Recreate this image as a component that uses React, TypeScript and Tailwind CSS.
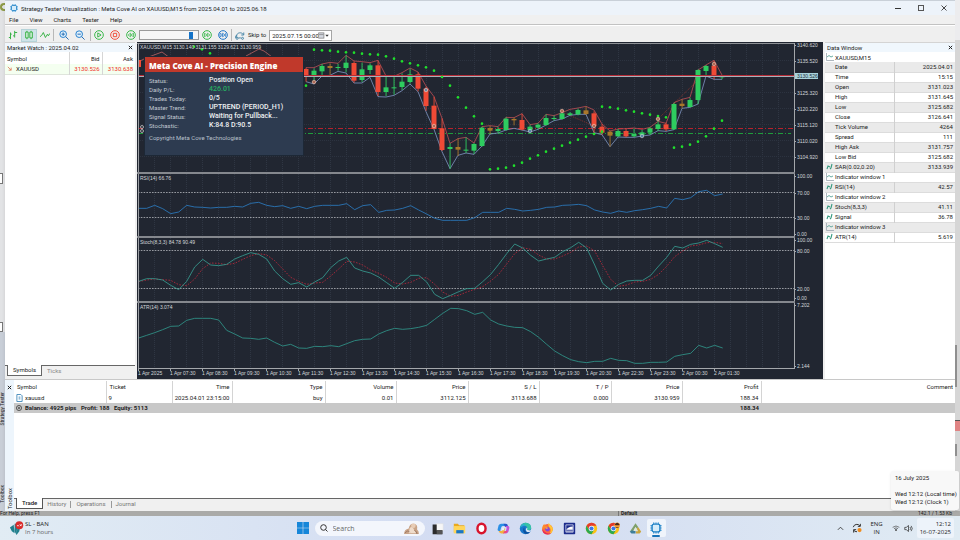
import type { ReactNode } from "react";

type Candle = [number, number, number, number, string];

const UP = "#2ecc5f";
const DOWN = "#f04a36";
const FLAT = "#a8772a";

// Chart values are stored in thirds of a pixel
const u = (v: number) => v / 3;

// high, body top, body bottom, low, color
const candles: Candle[] = [
  [203, 207, 229, 245, DOWN],
  [205, 212, 231, 243, UP],
  [192, 198, 214, 226, UP],
  [190, 198, 204, 224, FLAT],
  [191, 201, 204, 212, UP],
  [166, 188, 204, 217, UP],
  [184, 189, 242, 248, DOWN],
  [188, 208, 240, 246, UP],
  [190, 196, 210, 222, UP],
  [182, 196, 276, 288, DOWN],
  [228, 262, 276, 288, UP],
  [230, 262, 265, 284, UP],
  [220, 245, 261, 270, UP],
  [206, 223, 246, 251, UP],
  [217, 223, 266, 274, DOWN],
  [260, 266, 318, 332, DOWN],
  [290, 317, 387, 388, DOWN],
  [355, 385, 450, 453, DOWN],
  [430, 441, 447, 506, UP],
  [415, 441, 449, 468, FLAT],
  [412, 449, 452, 459, UP],
  [429, 432, 452, 462, UP],
  [380, 383, 438, 440, UP],
  [378, 384, 392, 402, FLAT],
  [380, 387, 393, 399, UP],
  [352, 356, 390, 392, UP],
  [353, 357, 361, 376, FLAT],
  [341, 360, 389, 391, DOWN],
  [374, 380, 390, 396, UP],
  [370, 374, 383, 388, UP],
  [343, 354, 375, 377, UP],
  [347, 354, 357, 362, UP],
  [338, 340, 357, 359, UP],
  [336, 340, 345, 348, UP],
  [326, 330, 343, 346, UP],
  [320, 331, 342, 345, FLAT],
  [334, 340, 378, 398, DOWN],
  [372, 380, 398, 404, DOWN],
  [392, 395, 407, 440, FLAT],
  [387, 393, 409, 411, UP],
  [386, 393, 409, 412, DOWN],
  [386, 402, 409, 411, UP],
  [390, 397, 405, 408, UP],
  [382, 385, 398, 405, UP],
  [364, 373, 387, 393, UP],
  [368, 373, 388, 393, DOWN],
  [308, 312, 388, 390, UP],
  [298, 311, 318, 325, FLAT],
  [293, 300, 321, 322, UP],
  [208, 210, 300, 312, UP],
  [195, 198, 213, 228, UP],
  [182, 197, 231, 238, DOWN],
  [226, 229, 232, 238, UP],
];

const sarFirst = [149, 151, 152, 155, 157, 158, 161, 163, 164, 169, 176, 184, 190, 196, 202, 212, 231, 257, 292, 323, 349, 371];
const sarSecond = [508, 506, 503, 497, 488, 476, 466, 455, 446, 437, 428, 419, 410, 402, 395];
const sarThird = [320, 322, 326, 331, 335, 340, 344, 348, 352];
const sarFourth = [443, 440, 434, 425, 409, 386, 362];

const highs = [
  203, 203, 192, 187, 190, 166, 183, 185, 188, 181, 228, 229, 218, 204, 216, 258, 290, 355, 430, 416, 412, 429, 380, 377, 380, 352, 353, 341, 374, 370, 343, 347, 338, 328, 324, 319, 330, 372, 393, 387,
  386, 384, 388, 382, 364, 370, 308, 298, 292, 210, 195, 181, 225,
];
const lows = [
  245, 252, 228, 226, 214, 219, 249, 249, 232, 290, 291, 286, 272, 252, 275, 335, 388, 455, 506, 466, 459, 463, 438, 402, 399, 390, 385, 390, 396, 388, 375, 362, 357, 346, 343, 343, 398, 404, 440, 411,
  412, 412, 408, 405, 392, 394, 389, 325, 322, 312, 228, 238, 238,
];

const rsi = [
  130, 130, 121, 131, 146, 141, 121, 126, 127, 129, 127, 127, 124, 126, 115, 112, 121, 125, 122, 130, 124, 131, 124, 121, 121, 121, 116, 134, 122, 119, 142, 136, 135, 130, 122, 135, 147, 160, 166, 166,
  166, 166, 158, 142, 142, 142, 130, 133, 138, 136, 133, 127, 126, 121, 120, 118, 122, 135, 141, 145, 138, 142, 137, 134, 130, 124, 129, 100, 104, 98, 80, 76, 92, 87,
];
const stoch = [
  349, 341, 341, 345, 361, 374, 349, 306, 283, 300, 302, 298, 282, 272, 263, 268, 282, 318, 341, 358, 353, 366, 351, 338, 308, 288, 277, 309, 318, 324, 336, 353, 370, 352, 331, 331, 351, 388, 401, 391,
  380, 371, 370, 350, 328, 298, 266, 237, 249, 271, 288, 282, 277, 260, 248, 232, 249, 300, 355, 375, 358, 348, 346, 346, 331, 303, 277, 244, 249, 238, 234, 226, 236, 247,
];
const stochSignal = [
  350, 345, 342, 344, 346, 359, 362, 342, 311, 294, 295, 299, 295, 283, 272, 266, 270, 287, 312, 337, 349, 358, 354, 352, 333, 312, 289, 291, 300, 315, 325, 337, 354, 357, 352, 340, 338, 358, 381, 394,
  391, 381, 373, 365, 348, 328, 297, 266, 248, 253, 270, 282, 282, 273, 262, 246, 243, 258, 302, 343, 364, 360, 351, 349, 343, 328, 304, 275, 258, 243, 240, 233, 232, 236,
];
const atr = [
  519, 511, 503, 494, 484, 483, 466, 460, 460, 460, 465, 496, 507, 519, 520, 523, 519, 532, 543, 538, 549, 550, 544, 545, 542, 545, 536, 527, 523, 522, 507, 497, 490, 493, 491, 487, 481, 463, 445, 430,
  431, 437, 448, 442, 465, 477, 483, 487, 488, 500, 517, 538, 558, 572, 584, 590, 593, 589, 589, 580, 586, 587, 595, 595, 592, 592, 591, 574, 569, 565, 541, 549, 541, 549,
];

const priceLabels: [string, number][] = [
  ["3140.620", 45],
  ["3135.520", 61],
  ["3125.320", 93],
  ["3120.220", 109],
  ["3115.120", 125],
  ["3110.020", 141],
  ["3104.920", 157],
  ["100.00", 176],
  ["70.00", 193],
  ["30.00", 218],
  ["0.00", 234],
  ["100.00", 240],
  ["80.00", 251],
  ["20.00", 289],
  ["0.00", 298],
  ["7.202", 305],
  ["2.144", 366],
];

const timeLabels = [
  "1 Apr 2025", "1 Apr 07:30", "1 Apr 08:30", "1 Apr 09:30", "1 Apr 10:30", "1 Apr 11:30", "1 Apr 12:30", "1 Apr 13:30", "1 Apr 14:30", "1 Apr 15:30",
  "1 Apr 16:30", "1 Apr 17:30", "1 Apr 18:30", "1 Apr 19:30", "1 Apr 20:30", "1 Apr 22:30", "1 Apr 23:30", "2 Apr 00:30", "2 Apr 01:30",
];

const markers: [number, number, string][] = [
  [314, 82, "#f28a6a"],
  [426, 90, "#8fb8d8"],
  [434, 126, "#f28a6a"],
  [530, 131, "#6fb6e6"],
  [562, 111, "#f28a6a"],
  [594, 126, "#f28a6a"],
  [642, 136, "#6fb6e6"],
  [658, 119, "#f2a07a"],
  [714, 64, "#f28a6a"],
];

function line(values: number[], x0: number, y0: number) {
  return values.map((v, i) => `${x0 + i * 8},${y0 + u(v)}`).join(" ");
}

function Dots({ values, x }: { values: number[]; x: number }) {
  return (
    <>
      {values.map((v, i) => (
        <circle key={i} cx={x + i * 8} cy={u(v)} r="1.3" fill="#1fe02c" />
      ))}
    </>
  );
}

function Chart() {
  return (
    <svg viewBox="137 42 686 337" className="block h-auto w-full bg-[#212631]" fontFamily="Liberation Sans, sans-serif" fontSize="5">
      {/* grid */}
      {Array.from({ length: 41 }, (_, i) => (
        <line key={i} x1={154.5 + i * 16} x2={154.5 + i * 16} y1="44" y2="368" stroke="#2f3643" strokeDasharray="1 1" />
      ))}
      {[61, 77, 93, 109, 125, 141, 157].map((y) => (
        <line key={y} x1="138" x2="794" y1={y - 0.5} y2={y - 0.5} stroke="#2c3340" strokeDasharray="1 1" />
      ))}

      {/* price pane */}
      <line x1="138" x2="794" y1="128.5" y2="128.5" stroke="#b5222c" strokeDasharray="5 2 1 2" />
      <line x1="138" x2="791" y1="133.5" y2="133.5" stroke="#1f9c3c" strokeDasharray="5 2 1 2" />
      <polyline points="562,112 594,126" fill="none" stroke="#c03a2c" strokeWidth="0.6" strokeDasharray="1 1" />
      <polyline points="658,119 698,80" fill="none" stroke="#c03a2c" strokeWidth="0.6" strokeDasharray="1 1" />
      <polyline points="138,62 146,58 154,55 162,52 170,58 200,60" fill="none" stroke="#d06a6a" strokeWidth="0.7" />
      <polyline points="246,56 259,49 264,51 272,57" fill="none" stroke="#d06a6a" strokeWidth="0.7" />
      <rect x="138" y="60" width="3" height="7" fill={DOWN} />
      <polyline points={line(highs, 306, 0)} fill="none" stroke="#d4545a" strokeWidth="0.7" />
      <polyline points={line(lows, 306, 0)} fill="none" stroke="#8ea6d8" strokeWidth="0.7" />
      {candles.map(([high, top, bottom, low, color], i) => (
        <g key={i} fill={color}>
          <rect x={305.6 + i * 8} y={u(high)} width="0.9" height={u(low - high)} />
          <rect x={303.5 + i * 8} y={u(top)} width="5" height={u(bottom - top)} />
        </g>
      ))}
      <rect x="138" y="75" width="656" height="1" fill="#b52a35" />
      <rect x="138" y="76" width="656" height="1" fill="#a9b0b8" />
      <Dots values={sarFirst} x={314} />
      <Dots values={sarSecond} x={490} />
      <Dots values={sarThird} x={602} />
      <Dots values={sarFourth} x={674} />
      <Dots values={[257]} x={306} />
      <Dots values={[140, 148, 160]} x={194} />
      {markers.map(([x, y, color], i) => (
        <g key={i}>
          <circle cx={x} cy={y} r="1.8" fill={color} stroke="#e0c8bc" strokeWidth="0.5" />
          <circle cx={x} cy={y} r="0.7" fill="#30343c" />
        </g>
      ))}
      <circle cx="142" cy="127" r="1.5" fill="none" stroke="#d8d8d8" strokeWidth="0.7" />
      <circle cx="142" cy="131" r="1.5" fill="none" stroke="#d8d8d8" strokeWidth="0.7" />

      {/* indicator panes */}
      {[192.5, 217.5, 250.5, 288.5].map((y) => (
        <line key={y} x1="138" x2="794" y1={y} y2={y} stroke="#b6b9be" strokeWidth="0.8" strokeDasharray="1.6 1.2" />
      ))}
      <polyline points={line(rsi, 138.7, 165)} fill="none" stroke="#2a76b8" strokeWidth="0.9" />
      <polyline points={line(stochSignal, 138.7, 165)} fill="none" stroke="#c22a3c" strokeWidth="0.8" strokeDasharray="1.6 1.4" />
      <polyline points={line(stoch, 138.7, 165)} fill="none" stroke="#35948a" strokeWidth="0.9" />
      <polyline points={line(atr, 138.7, 165)} fill="none" stroke="#2f8f84" strokeWidth="0.9" />

      {/* frame and separators */}
      <rect x="137" y="43" width="657" height="1" fill="#8d9095" />
      <rect x="138" y="43" width="1" height="326" fill="#9a9da2" />
      <rect x="794" y="43" width="1" height="326" fill="#a4a7ab" />
      <rect x="137" y="172" width="658" height="2" fill="#85888e" />
      <rect x="137" y="236" width="658" height="2" fill="#85888e" />
      <rect x="137" y="301" width="658" height="2" fill="#85888e" />
      <rect x="138" y="368" width="657" height="1" fill="#a4a7ab" />

      {priceLabels.map(([label, y], i) => (
        <g key={i}>
          <rect x="794" y={y} width="2" height="1" fill="#a4a7ab" />
          <text x="797" y={y + 2} fill="#d3d6da">
            {label}
          </text>
        </g>
      ))}
      <rect x="795" y="73" width="23" height="6" fill="#a9d3dc" />
      <text x="797" y="78" fill="#22313a">
        3130.526
      </text>

      {timeLabels.map((label, i) => (
        <g key={i}>
          <rect x={138 + i * 32} y="368" width="1" height="3" fill="#a4a7ab" />
          <text x={138 + i * 32} y="375" fill="#d3d6da">
            {label}
          </text>
        </g>
      ))}

      <text x="140" y="49" fill="#d3d6da">
        XAUUSD,M15 3130.140 3131.155 3129.621 3130.959
      </text>
      <text x="140" y="180" fill="#d3d6da">
        RSI(14) 66.76
      </text>
      <text x="140" y="244" fill="#d3d6da">
        Stoch(8,3,3) 84.78 90.49
      </text>
      <text x="140" y="309" fill="#d3d6da">
        ATR(14) 3.074
      </text>
    </svg>
  );
}

const panelRows = [
  ["Status:", "Position Open"],
  ["Daily P/L:", "426.01"],
  ["Trades Today:", "0/5"],
  ["Master Trend:", "UPTREND (PERIOD_H1)"],
  ["Signal Status:", "Waiting for Pullback..."],
  ["Stochastic:", "K:84.8 D:90.5"],
];

function AdvisorPanel() {
  return (
    <section className="absolute top-[14px] left-[7px] h-[100px] w-[160px] border border-[#1d2836] bg-[#2d3b50] text-[6px]">
      <h2 className="flex h-[15px] items-center bg-[#c0392b] px-1 pt-[2px] font-['Open_Sans',sans-serif] text-[8px] leading-none font-extrabold whitespace-nowrap text-white">
        Meta Cove AI - Precision Engine
      </h2>
      <dl className="px-1 pt-1">
        {panelRows.map(([label, value]) => (
          <div key={label} className="flex h-[9px] items-center">
            <dt className="w-[60px] text-[#c3cad3]">{label}</dt>
            <dd className={value === "426.01" ? "text-[7px] font-medium text-[#27ae60]" : "text-[7px] font-medium whitespace-nowrap text-[#eef1f3]"}>{value}</dd>
          </div>
        ))}
      </dl>
      <p className="px-1 pt-[3px] text-[#b9c1cb]">Copyright Meta Cove Technologies</p>
    </section>
  );
}

function ToolButton({ label, children, active }: { label: string; children: ReactNode; active?: boolean }) {
  return (
    <button
      type="button"
      aria-label={label}
      className={
        active
          ? "flex h-[13px] w-4 items-center justify-center border border-[#b5d3d8] bg-[#cfe3e8]"
          : "flex h-[13px] w-4 items-center justify-center"
      }
    >
      <svg viewBox="0 0 12 12" className="size-[10px]" fill="none" strokeWidth="1.2">
        {children}
      </svg>
    </button>
  );
}

function Divider() {
  return <span className="h-3 w-px bg-[#b8b8b8]" />;
}

function Toolbar() {
  return (
    <div className="flex h-4 items-center bg-[#efefef] pt-[2px]">
      <ToolButton label="Bar chart">
        <path d="M3 3v8M1 9h2M3 5h1.500M8 1v8M6 7h2M8 3h3" stroke="#3cb44a" />
      </ToolButton>
      <ToolButton label="Candlesticks" active>
        <path d="M3.500 1v10M8.500 1v10" stroke="#3cb44a" />
        <path d="M2 2.500h3v7H2zM7 2.500h3v7H7z" stroke="#3cb44a" fill="#d8f0e0" />
      </ToolButton>
      <ToolButton label="Line chart">
        <path d="M0 8l2-1.500L4 3l2.500 6L9 5l1 2 2-3" stroke="#3cb44a" />
      </ToolButton>
      <Divider />
      <span className="w-[2px]" />
      <ToolButton label="Zoom in">
        <circle cx="5" cy="5" r="4" stroke="#2a83cf" fill="#e1f0fb" />
        <path d="M5 3v4M3 5h4M8 8l3.500 3.500" stroke="#2a6fb5" />
      </ToolButton>
      <ToolButton label="Zoom out">
        <circle cx="5" cy="5" r="4" stroke="#2a83cf" fill="#e1f0fb" />
        <path d="M3 5h4M8 8l3.500 3.500" stroke="#2a6fb5" />
      </ToolButton>
      <span className="w-[2px]" />
      <Divider />
      <ToolButton label="Play">
        <circle cx="6" cy="6" r="5.200" stroke="#3cb94c" />
        <path d="M4.500 3.500v5l4-2.500z" stroke="#3cb94c" />
      </ToolButton>
      <ToolButton label="Stop">
        <circle cx="6" cy="6" r="5.200" stroke="#f0503c" />
        <path d="M4 4h4v4H4z" stroke="#f0503c" />
      </ToolButton>
      <ToolButton label="Slower">
        <circle cx="6" cy="6" r="5.200" stroke="#3cb94c" />
        <path d="M5.500 3.800v4.400L2.500 6zM9 3.800v4.400L6 6z" stroke="#3cb94c" strokeWidth="0.9" />
      </ToolButton>
      <input
        type="range"
        aria-label="Speed"
        min="0"
        max="100"
        defaultValue="91"
        className="h-[10px] w-[60px] appearance-none border border-[#9a9a9a] bg-[#f6f6f6] [&::-webkit-slider-thumb]:h-[7px] [&::-webkit-slider-thumb]:w-1 [&::-webkit-slider-thumb]:appearance-none [&::-webkit-slider-thumb]:bg-[#1473c8]"
      />
      <ToolButton label="Faster">
        <circle cx="6" cy="6" r="5.200" stroke="#3cb94c" />
        <path d="M3 3.800v4.400L6 6zM6.500 3.800v4.400l3-2.200z" stroke="#3cb94c" strokeWidth="0.9" />
      </ToolButton>
      <ToolButton label="Fast forward">
        <circle cx="6" cy="6" r="5.200" stroke="#2478c8" />
        <path d="M2.500 3.800v4.400l3-2.200zM5.500 3.800v4.400l3-2.200zM9.200 3.500v5" stroke="#2478c8" strokeWidth="0.9" />
      </ToolButton>
      <Divider />
      <ToolButton label="Skip">
        <path d="M2 9V7c0-4 6-5 8-1.500M0.500 9.500V8L2 6M10.500 3v3H7.500M4 9.500h3" stroke="#4a87a8" />
        <circle cx="2.500" cy="10" r="1.200" stroke="#4a87a8" />
        <circle cx="9" cy="10" r="1.200" stroke="#4a87a8" />
      </ToolButton>
      <label htmlFor="skip-date" className="text-[6px] leading-none whitespace-nowrap">
        Skip to
      </label>
      <div className="ml-[3px] flex h-[11px] w-[63px] items-center border border-[#a5a5a5] bg-white pl-[2px]">
        <input id="skip-date" defaultValue="2025.07.15 00:00" className="h-2 w-[46px] bg-transparent text-[6px] leading-none outline-none" />
        <svg viewBox="0 0 12 8" className="h-[7px] w-[11px]">
          <rect x="0.500" y="1" width="6" height="6" fill="#d5d9e2" stroke="#777" strokeWidth="0.8" />
          <path d="M1 3h5" stroke="#777" strokeWidth="0.8" />
          <path d="M8 3h4L10 5.500z" fill="#333" />
        </svg>
      </div>
    </div>
  );
}

function CloseMark() {
  return (
    <button type="button" aria-label="Close" className="flex size-[6px] items-center justify-center">
      <svg viewBox="0 0 6 6" className="size-[5px]" stroke="#222" strokeWidth="1.200">
        <path d="M1 1l4 4M5 1l-4 4" />
      </svg>
    </button>
  );
}

function MarketWatch() {
  return (
    <aside className="flex w-[130px] shrink-0 flex-col bg-white">
      <div className="flex h-[10px] items-center justify-between border-t border-[#d4d4d4] bg-[#f0f7fd] px-[2px]">
        <h2 className="text-[6px]">Market Watch : 2025.04.02</h2>
        <CloseMark />
      </div>
      <table className="w-full table-fixed border-collapse text-[6px]">
        <colgroup>
          <col />
          <col className="w-[33px]" />
          <col className="w-[33px]" />
        </colgroup>
        <thead>
          <tr className="h-3">
            <th className="border-r border-[#d6d6d6] p-0 pl-[2px] text-left font-normal">Symbol</th>
            <th className="border-r border-[#d6d6d6] p-0 pr-[2px] text-right font-normal">Bid</th>
            <th className="p-0 pr-[2px] text-right font-normal">Ask</th>
          </tr>
        </thead>
        <tbody>
          <tr className="h-[10px] border-b border-[#dfe5dc] bg-[#f4fff0] text-[#f03226]">
            <td className="border-r border-[#d6d6d6] p-0 pl-[2px]">
              <span className="flex items-center gap-1 text-[#222]">
                <svg viewBox="0 0 6 6" className="size-[5px]" fill="none" stroke="#e07a5a">
                  <path d="M1 1l4 4M5 2v3H2" />
                </svg>
                XAUUSD
              </span>
            </td>
            <td className="border-r border-[#d6d6d6] p-0 pr-[2px] text-right">3130.526</td>
            <td className="p-0 pr-[2px] text-right">3130.638</td>
          </tr>
        </tbody>
      </table>
      <div className="mt-auto flex h-[14px] items-start border-t border-[#666] bg-[#f0f0f0] pl-[2px] text-[6px] leading-none">
        <button type="button" className="-mt-px h-[11px] border-x border-b border-[#666] bg-white px-[5px]">
          Symbols
        </button>
        <button type="button" className="h-[10px] px-[5px] text-[#888]">
          Ticks
        </button>
      </div>
    </aside>
  );
}

const dataRows: [string, string, string][] = [
  ["", "Date", "2025.04.01"],
  ["", "Time", "15:15"],
  ["", "Open", "3131.023"],
  ["", "High", "3131.645"],
  ["", "Low", "3125.682"],
  ["", "Close", "3126.641"],
  ["", "Tick Volume", "4264"],
  ["", "Spread", "111"],
  ["", "High Ask", "3131.757"],
  ["", "Low Bid", "3125.682"],
  ["line", "SAR(0.02,0.20)", "3133.939"],
  ["window", "Indicator window 1", ""],
  ["line", "RSI(14)", "42.57"],
  ["window", "Indicator window 2", ""],
  ["line", "Stoch(8,3,3)", "41.11"],
  ["line", "Signal", "36.78"],
  ["window", "Indicator window 3", ""],
  ["line", "ATR(14)", "5.619"],
];

function RowIcon({ kind }: { kind: string }) {
  if (kind === "window") {
    return (
      <svg viewBox="0 0 8 8" className="size-2" fill="none">
        <path d="M0.500 0v7.500H8" stroke="#9aa6ae" strokeWidth="0.8" />
        <path d="M1 4l2-1.500L5 4l2-1" stroke="#43988c" strokeWidth="0.8" />
      </svg>
    );
  }
  if (kind === "line") {
    return (
      <svg viewBox="0 0 8 8" className="size-2" fill="none">
        <path d="M1 6l1-3 2 1M4 6l1-1 1-4" stroke="#379a80" strokeWidth="1.100" />
      </svg>
    );
  }
  return null;
}

function DataWindow() {
  return (
    <aside className="ml-[2px] w-[130px] shrink-0 bg-white">
      <div className="flex h-[10px] items-center justify-between border-t border-[#d4d4d4] bg-[#f0f7fd] px-[2px]">
        <h2 className="text-[6px]">Data Window</h2>
        <CloseMark />
      </div>
      <div className="flex h-[10px] items-center text-[6px]">
        <span className="flex w-[10px] justify-center">
          <RowIcon kind="window" />
        </span>
        XAUUSD,M15
      </div>
      <table className="w-full table-fixed border-collapse text-[6px] leading-none">
        <colgroup>
          <col className="w-[10px]" />
          <col />
          <col className="w-[61px]" />
        </colgroup>
        <tbody>
          {dataRows.map(([kind, name, value]) => (
            <tr key={name} className="h-[10px] border-b border-[#dcdcdc] odd:bg-[#eaeaea]">
              <td className="p-0 pl-px">
                <RowIcon kind={kind} />
              </td>
              <td className="p-0 whitespace-nowrap">{name}</td>
              <td className={kind === "window" ? "p-0" : "border-l border-[#d0d0d0] p-0 pr-[2px] text-right"}>{value}</td>
            </tr>
          ))}
        </tbody>
      </table>
    </aside>
  );
}

const tradeHead = ["Time", "Type", "Volume", "Price", "S / L", "T / P", "Price", "Profit", "Comment"];
const tradeRow = ["2025.04.01 23:15:00", "buy", "0.01", "3112.125", "3113.688", "0.000", "3130.959", "188.34", ""];

function Toolbox() {
  return (
    <section className="flex flex-1 border-t border-[#c8c8c8] bg-white">
      <div className="flex w-[9px] flex-col items-center justify-between bg-[#edf5fc] pt-1 pb-[2px]">
        <CloseMark />
        <h2 className="text-[6px] leading-none [writing-mode:sideways-lr]">Toolbox</h2>
      </div>
      <div className="flex min-w-0 flex-1 flex-col pt-px">
        <table className="w-full table-fixed border-collapse text-[6px] leading-none">
          <colgroup>
            <col className="w-[92px]" />
            <col className="w-[66px]" />
            <col className="w-[60px]" />
            <col className="w-[93px]" />
            <col className="w-[71px]" />
            <col className="w-[72px]" />
            <col className="w-[71px]" />
            <col className="w-[72px]" />
            <col className="w-[71px]" />
            <col className="w-[79px]" />
            <col />
          </colgroup>
          <thead>
            <tr className="h-3">
              <th className="border-r border-[#d4d4d4] p-0 pl-[3px] text-left font-normal">Symbol</th>
              <th className="border-r border-[#d4d4d4] p-0 pl-[3px] text-left font-normal">Ticket</th>
              {tradeHead.map((name, i) => (
                <th key={i} className="border-r border-[#d4d4d4] p-0 pr-[2px] text-right font-normal last:border-r-0">
                  {name}
                </th>
              ))}
            </tr>
          </thead>
          <tbody>
            <tr className="h-[10px]">
              <td className="border-r border-[#d4d4d4] p-0 pl-[2px]">
                <span className="flex items-center gap-[2px]">
                  <svg viewBox="0 0 8 9" className="h-2 w-[7px]" fill="none" stroke="#3d86b8">
                    <path d="M1 0.500h4.500L7 2v6.500H1z" />
                    <path d="M3 3.500h2M3 5.500h2" />
                  </svg>
                  xauusd
                </span>
              </td>
              <td className="border-r border-[#d4d4d4] p-0 pl-[2px]">9</td>
              {tradeRow.map((value, i) => (
                <td key={i} className="border-r border-[#d4d4d4] p-0 pr-[2px] text-right last:border-r-0">
                  {value}
                </td>
              ))}
            </tr>
            <tr className="h-[10px] bg-[#c8c8c8] font-bold">
              <td colSpan={9} className="p-0 pl-[2px]">
                <span className="flex items-center gap-[3px]">
                  <svg viewBox="0 0 8 8" className="size-[6px]" fill="none" stroke="#333">
                    <circle cx="4" cy="4" r="3.400" />
                    <path d="M2.500 4h3M4 2.500v3" />
                  </svg>
                  <span className="whitespace-pre">Balance: 4925 pips   Profit: 188   Equity: 5113</span>
                </span>
              </td>
              <td className="p-0 pr-[2px] text-right">188.34</td>
              <td />
            </tr>
          </tbody>
        </table>
        <div className="mt-auto flex h-[13px] items-start border-t border-[#666] bg-[#f0f0f0] pl-[2px] text-[6px] leading-none text-[#777]">
          <button type="button" className="-mt-px h-[11px] border-x border-b border-[#555] bg-white px-[5px] font-medium text-[#222]">
            Trade
          </button>
          <button type="button" className="h-[10px] px-1">
            History
          </button>
          <span className="mt-[2px] h-[7px] w-px bg-[#999]" />
          <button type="button" className="h-[10px] px-[5px]">
            Operations
          </button>
          <span className="mt-[2px] h-[7px] w-px bg-[#999]" />
          <button type="button" className="h-[10px] px-1">
            Journal
          </button>
        </div>
      </div>
    </section>
  );
}

function ChipLogo({ className }: { className: string }) {
  return (
    <svg viewBox="0 0 16 16" className={className}>
      <path d="M5 0.500v15M8 0.500v15M11 0.500v15M0.500 5h15M0.500 8h15M0.500 11h15" stroke="#1f8ad0" strokeWidth="1.300" />
      <rect x="2.800" y="2.800" width="10.400" height="10.400" rx="2.500" fill="#d5ecfa" stroke="#1c7fc4" strokeWidth="1.800" />
    </svg>
  );
}

function ChromeLogo() {
  return (
    <>
      <circle cx="8" cy="8" r="7" fill="#fbc116" />
      <path d="M1.940 4.500A7 7 0 0 1 14.060 4.500L8 4.500L5 9.700z" fill="#e33b2e" />
      <path d="M1.940 4.500A7 7 0 0 0 8 15L11 9.800L5 9.700z" fill="#2da94f" />
      <circle cx="8" cy="8" r="3.400" fill="#fff" />
      <circle cx="8" cy="8" r="2.600" fill="#3b78e7" />
    </>
  );
}

const apps: { name: string; icon: ReactNode }[] = [
  {
    name: "Task view",
    icon: (
      <>
        <path d="M6 2h9v9H6z" fill="#f6f6f6" stroke="#ddd" strokeWidth="0.5" />
        <path d="M2 3h5v7h7v5H2z" fill="#2b2b2b" />
        <path d="M7 10h7v5H7z" fill="#555" />
      </>
    ),
  },
  {
    name: "File Explorer",
    icon: (
      <>
        <path d="M1 2h5l1.500 2H14v9H1z" fill="#e9a91f" />
        <path d="M1 5h14v9H1z" fill="#ffd65a" />
        <path d="M4 10h9v4H4z" fill="#1976c5" />
      </>
    ),
  },
  {
    name: "Opera",
    icon: <ellipse cx="8" cy="8" rx="5" ry="5.800" fill="#fff" stroke="#d8142c" strokeWidth="3" />,
  },
  {
    name: "Copilot",
    icon: (
      <>
        <path d="M5 2h4l1 3H7q-1.500 0-2 2l-1 4H2.500Q0 11 1 8l1-4q1-2 3-2z" fill="#2a8fe6" />
        <path d="M8 2h3q2 0 2.500 3l.5 1h-4z" fill="#2456c9" />
        <path d="M10 5h3q3 0 2 3l-1 4q-1 2-3 2h-1l2-7z" fill="#c455d6" />
        <path d="M2 11h4l2-4 2 1-1.500 6H5q-2 0-3-3z" fill="#f0b13e" />
        <path d="M9 11h4l-1 2q-1 1-3 1H7.500z" fill="#ee4f72" />
        <path d="M6.500 6.500h3L8.500 10H6z" fill="#e6eefb" />
      </>
    ),
  },
  {
    name: "Edge",
    icon: (
      <>
        <circle cx="8" cy="8" r="7" fill="#1a78cc" />
        <path d="M1.200 7Q3 1 8.500 1 15 1.500 15 7.500q0 2.500-3.500 2.500-2.500 0-1.500-2 .5-3-3-3.500Q3 4.500 1.200 7z" fill="#38c3a6" />
        <path d="M1.200 7Q3 2.500 8 2.800L6 5Q3 5 1.200 7z" fill="#2aa7dc" />
        <path d="M6.500 6.500q-3 4 .5 7.500 4 1.500 6.500-1.500-3 .8-5-.8-2.500-2-2-5.200z" fill="#0d4f9c" />
        <path d="M9.500 7q1.500 0 .5 1.500-.5 1.500 2 1.800 2 .2 3-1-.5 2-2 3-2.500.5-4-1-1.500-2.500.5-4.300z" fill="#dfe9f6" />
      </>
    ),
  },
  {
    name: "Firefox",
    icon: (
      <>
        <circle cx="8" cy="9" r="6.500" fill="#ff6a3a" />
        <path d="M9.500 1q1 2 3 3.500Q15 7 14.500 10q-1 4-5 5.200Q13 12 11.500 8 8 5 9.500 1z" fill="#ffc936" />
        <path d="M1.500 9Q1.500 4 4 2q.2 2 1.500 2.500L8 5 6.500 7z" fill="#ff8a2a" />
        <path d="M1.500 9q0 6 6.500 6.500 3 0 4.500-2-5 1.500-8-1.500Q2.500 10.500 1.500 9z" fill="#e62a5c" />
        <circle cx="8" cy="9" r="2.800" fill="#8548d8" />
        <path d="M5 7q2-1 4 .5L7 8.500z" fill="#ffb13a" />
      </>
    ),
  },
  {
    name: "Screen recorder",
    icon: (
      <>
        <rect x="1" y="1" width="14" height="14" rx="1" fill="#1c2c8c" />
        <path d="M3.500 3.500h9v9h-9z" fill="none" stroke="#e8ebf8" strokeWidth="0.9" />
        <path d="M4 9.500Q6 6 12 5.500v4z" fill="#fff" />
        <path d="M4 11.200h8" stroke="#fff" />
      </>
    ),
  },
  { name: "Chrome", icon: <ChromeLogo /> },
  {
    name: "Chrome profile",
    icon: (
      <>
        <ChromeLogo />
        <circle cx="12.500" cy="4" r="3.500" fill="#f2a03c" />
        <path d="M9.500 3q3-4 6 0l-1 1h-4zM10 7q2-2 5 0z" fill="#4a2a1c" />
      </>
    ),
  },
  {
    name: "Recycle Drive",
    icon: (
      <>
        <path d="M8 1.500l3.500 5-2 1.500L8 6l-3.500 6H1z" fill="#7fa06a" />
        <path d="M11.500 6.500L15 12l-2 2H8.500v-2.500h2.500L9.500 8z" fill="#c9a53a" />
        <path d="M1 12l2-1.500h5V14H3z" fill="#3f7f9a" />
        <path d="M8 6l2.500 5h-5z" fill="#dfe8d6" />
      </>
    ),
  },
];

function Taskbar() {
  return (
    <footer className="grid h-6 shrink-0 grid-cols-[1fr_auto_1fr] items-center bg-linear-to-r from-[#e1ecf4] via-[#d2dbf2] to-[#e0ebf3] font-['Open_Sans',sans-serif] text-[6px] text-[#222]">
      <button type="button" className="flex items-center gap-px pl-[9px] text-left">
        <svg viewBox="0 0 16 16" className="size-[15px]">
          <path d="M1 7l4-3 1 9-3-2zM6 3h3l-1 12-2-4zM9 6l3-1-1 6-3 4z" fill="#1f7f8c" />
          <circle cx="11" cy="4.500" r="4.200" fill="#d92b2b" />
          <path d="M8.500 5h2M11.500 3.500l2 2M13.500 3.500l-2 2" stroke="#fff" strokeWidth="0.9" />
        </svg>
        <span className="leading-2">
          SL - BAN
          <br />
          <span className="text-[#666]">In 7 hours</span>
        </span>
      </button>
      <nav className="flex items-center pl-[2px]">
        <button type="button" aria-label="Start" className="mr-[6px]">
          <svg viewBox="0 0 12 12" className="size-3" fill="#1686d9">
            <path d="M0 0h5.700v5.700H0zM6.300 0H12v5.700H6.300zM0 6.300h5.700V12H0zM6.300 6.300H12V12H6.300z" />
          </svg>
        </button>
        <label className="mr-[2px] flex h-[15px] w-[110px] items-center gap-[5px] rounded-full bg-[#f3f6fc] pr-[5px] pl-[5px]">
          <svg viewBox="0 0 8 8" className="size-2" fill="none" stroke="#333">
            <circle cx="3.500" cy="3.500" r="2.800" />
            <path d="M5.500 5.500l2 2" />
          </svg>
          <input aria-label="Search" placeholder="Search" className="w-0 flex-1 bg-transparent text-[7px] leading-none outline-none placeholder:text-[#666]" />
          <svg viewBox="0 0 18 14" className="h-[13px] w-[17px]">
            <path d="M1 13q0-5 5-6 1-6 6-5 4 1 3 6 2 1 2 5z" fill="#c9a488" />
            <path d="M7 7q2-3 4 0l3 5H6z" fill="#efdccb" />
            <circle cx="11" cy="4" r="2.500" fill="#e8cdb6" />
            <path d="M2 12q3-4 5-1M12 9q3 1 3 4" stroke="#8d6b57" fill="none" strokeWidth="0.8" />
          </svg>
        </label>
        {apps.map((app) => (
          <button key={app.name} type="button" aria-label={app.name} className="flex h-[18px] w-[22px] items-center justify-center">
            <svg viewBox="0 0 16 16" className="size-[13px]">
              {app.icon}
            </svg>
          </button>
        ))}
        <button type="button" aria-label="Strategy Tester" className="flex h-[18px] w-[19px] flex-col items-center justify-between rounded-xs bg-[#eff4fb] pt-[3px]">
          <ChipLogo className="size-3" />
          <span className="h-[2px] w-2 rounded-full bg-[#1673b8]" />
        </button>
      </nav>
      <div className="flex items-center justify-end pr-[6px]">
        <svg viewBox="0 0 8 8" className="mr-2 size-[7px]" fill="none" stroke="#333">
          <path d="M1 5.500l3-3 3 3" />
        </svg>
        <svg viewBox="0 0 12 12" className="mr-2 size-[10px]" fill="none" stroke="#333" strokeWidth="1.200">
          <path d="M1.500 5a4.500 4.500 0 0 1 8-1.500M10 1v3H7M6 10.500a4.500 4.500 0 0 1-4-2M2 11.500V8h3" />
          <circle cx="9" cy="8.500" r="2.500" fill="#f08c1c" stroke="none" />
        </svg>
        <span className="mr-[9px] text-center leading-2">
          ENG
          <br />
          IN
        </span>
        <svg viewBox="0 0 12 12" className="mr-1 size-2" fill="none" stroke="#444">
          <path d="M1 5q5-4 10 0M3 7q3-2.500 6 0" />
          <circle cx="6" cy="9" r="1" fill="#444" />
        </svg>
        <svg viewBox="0 0 12 12" className="mr-1 size-[9px]" fill="none" stroke="#333">
          <path d="M1 4.500h2L6 2v8L3 7.500H1zM8 4q1.500 2 0 4M9.500 2.500q3 3.500 0 7" />
        </svg>
        <span className="rounded-xs bg-[#edf3fa] px-[3px] py-[2px] text-right leading-2 whitespace-nowrap">
          12:12
          <br />
          16-07-2025
        </span>
      </div>
    </footer>
  );
}

export default function App() {
  return (
    <div className="relative flex min-h-screen flex-col overflow-hidden bg-[#c4c4c4] font-[Roboto,sans-serif] text-[#222]">
      <div className="flex flex-1">
        {/* sliver of the terminal window behind, left side */}
        <div className="flex w-[5px] shrink-0 flex-col bg-[#e3e4e6] text-[5px] leading-none">
          <span className="mt-[3px] h-2 w-[5px] rounded-l-full border-2 border-r-0 border-[#8d9a48]" />
          <span className="mt-[162px] h-[11px] w-[3px] border border-l-0 border-[#777] bg-white" />
          <span className="mt-[138px] h-[10px] w-[3px] border border-l-0 border-[#777] bg-white" />
          <div className="flex flex-1 flex-col justify-between bg-[#c9cfd8] pt-[60px] pb-2">
            <span className="whitespace-nowrap [writing-mode:sideways-lr]">Strategy Tester</span>
            <span className="[writing-mode:sideways-lr]">Toolbox</span>
          </div>
        </div>

        <main className="flex min-w-0 flex-1 flex-col border-t border-[#c9d0d8] bg-[#f0f0f0] shadow-md">
          <header className="flex h-[14px] items-center bg-[#edf3fa] pl-[5px]">
            <ChipLogo className="size-2" />
            <h1 className="ml-[3px] text-[6px]">Strategy Tester Visualization : Meta Cove AI on XAUUSD,M15 from 2025.04.01 to 2025.06.18</h1>
            <div className="ml-auto flex items-center">
              <button type="button" aria-label="Minimize" className="flex w-[23px] justify-center">
                <span className="h-px w-[6px] bg-[#333]" />
              </button>
              <button type="button" aria-label="Maximize" className="flex w-[23px] justify-center">
                <span className="size-[6px] border border-[#555]" />
              </button>
              <button type="button" aria-label="Close window" className="flex w-[23px] justify-center">
                <svg viewBox="0 0 6 6" className="size-[6px]" stroke="#333" strokeWidth="0.9">
                  <path d="M0.500 0.500l5 5M5.500 0.500l-5 5" />
                </svg>
              </button>
            </div>
          </header>
          <nav className="flex h-[10px] items-center gap-[11px] border-b border-[#c2c2c2] pl-1 text-[6px] leading-none">
            <button type="button">File</button>
            <button type="button">View</button>
            <button type="button">Charts</button>
            <button type="button">Tester</button>
            <button type="button">Help</button>
          </nav>
          <div className="h-px bg-white" />
          <Toolbar />
          <div className="flex">
            <MarketWatch />
            <div className="relative ml-[2px] min-w-0 flex-1">
              <Chart />
              <AdvisorPanel />
            </div>
            <DataWindow />
          </div>
          <Toolbox />
        </main>

        {/* right side sliver */}
        <div className="flex w-[5px] shrink-0 flex-col bg-[#d6d6d6]">
          <span className="h-10 bg-[#ececee]" />
          <span className="mt-[305px] h-[42px] w-[2px] bg-[#8f8f8f]" />
          <span className="mt-[33px] h-[11px] border-t border-[#555] bg-[#e08484]" />
          <span className="mt-[13px] h-3 w-[2px] bg-[#8f8f8f]" />
        </div>
      </div>

      <div className="flex h-[5px] shrink-0 items-center bg-[#aaaaa8] text-[5px] leading-[5px]">
        <span>For Help, press F1</span>
        <span className="ml-auto w-[300px] border-l border-[#777] pl-[2px] font-bold">Default</span>
        <span className="mr-2">142.1 / 1.53 Kb</span>
      </div>

      <Taskbar />

      <div role="tooltip" className="absolute right-px bottom-[30px] h-[39px] w-[68px] rounded-xs bg-[#f8f8f8] pt-[3px] pl-1 text-[6px] leading-2 whitespace-nowrap shadow">
        <p>16 July 2025</p>
        <p className="pt-2">Wed 12:12 (Local time)</p>
        <p>Wed 12:12 (Clock 1)</p>
      </div>
    </div>
  );
}
